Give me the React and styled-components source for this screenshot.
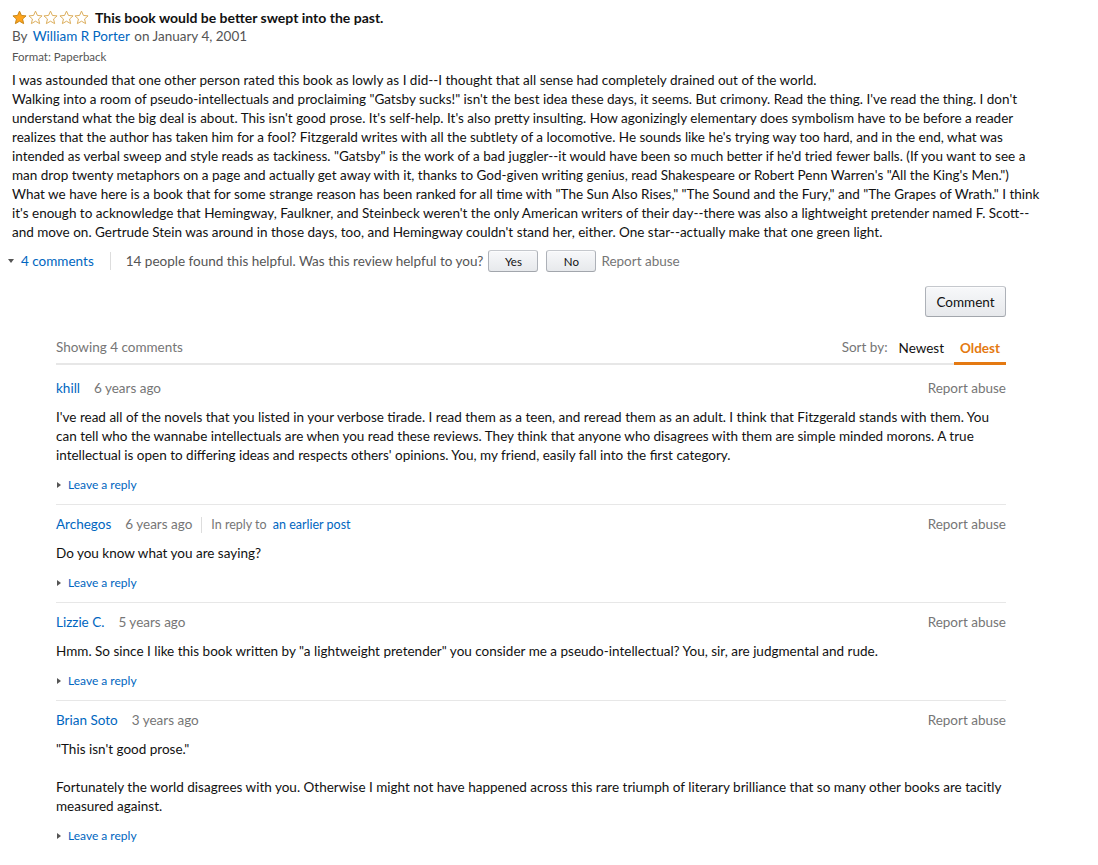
import React from 'react';
import styled, { createGlobalStyle } from 'styled-components';

const GlobalStyle = createGlobalStyle`
  body {
    margin: 0;
    background: #fff;
    font-family: Lato, "Liberation Sans", Arial, sans-serif;
    color: #111;
  }
`;

const reviewLines = [
  'I was astounded that one other person rated this book as lowly as I did--I thought that all sense had completely drained out of the world.',
  'Walking into a room of pseudo-intellectuals and proclaiming "Gatsby sucks!" isn\'t the best idea these days, it seems. But crimony. Read the thing. I\'ve read the thing. I don\'t',
  'understand what the big deal is about. This isn\'t good prose. It\'s self-help. It\'s also pretty insulting. How agonizingly elementary does symbolism have to be before a reader',
  'realizes that the author has taken him for a fool? Fitzgerald writes with all the subtlety of a locomotive. He sounds like he\'s trying way too hard, and in the end, what was',
  'intended as verbal sweep and style reads as tackiness. "Gatsby" is the work of a bad juggler--it would have been so much better if he\'d tried fewer balls. (If you want to see a',
  'man drop twenty metaphors on a page and actually get away with it, thanks to God-given writing genius, read Shakespeare or Robert Penn Warren\'s "All the King\'s Men.")',
  'What we have here is a book that for some strange reason has been ranked for all time with "The Sun Also Rises," "The Sound and the Fury," and "The Grapes of Wrath." I think',
  'it\'s enough to acknowledge that Hemingway, Faulkner, and Steinbeck weren\'t the only American writers of their day--there was also a lightweight pretender named F. Scott--',
  'and move on. Gertrude Stein was around in those days, too, and Hemingway couldn\'t stand her, either. One star--actually make that one green light.',
];

const comments = [
  {
    author: 'khill',
    age: '6 years ago',
    lines: [
      'I\'ve read all of the novels that you listed in your verbose tirade. I read them as a teen, and reread them as an adult. I think that Fitzgerald stands with them. You',
      'can tell who the wannabe intellectuals are when you read these reviews. They think that anyone who disagrees with them are simple minded morons. A true',
      'intellectual is open to differing ideas and respects others\' opinions. You, my friend, easily fall into the first category.',
    ],
  },
  {
    author: 'Archegos',
    age: '6 years ago',
    replyTo: true,
    lines: ['Do you know what you are saying?'],
  },
  {
    author: 'Lizzie C.',
    age: '5 years ago',
    lines: ['Hmm. So since I like this book written by "a lightweight pretender" you consider me a pseudo-intellectual? You, sir, are judgmental and rude.'],
  },
  {
    author: 'Brian Soto',
    age: '3 years ago',
    lines: [
      '"This isn\'t good prose."',
      '',
      'Fortunately the world disagrees with you. Otherwise I might not have happened across this rare triumph of literary brilliance that so many other books are tacitly',
      'measured against.',
    ],
  },
];

const Star = ({ filled }) => (
  <svg width="15" height="15" viewBox="0 0 24 24">
    <path
      d="M12 1.8l3.1 6.9 7.4.7-5.6 5 1.7 7.4L12 17.9l-6.6 3.9 1.7-7.4-5.6-5 7.4-.7z"
      fill={filled ? '#ffa41c' : '#fff'}
      stroke={filled ? '#c88719' : '#dcae5c'}
      strokeWidth="1.6"
      strokeLinejoin="round"
    />
  </svg>
);

function App() {
  return (
    <Page>
      <GlobalStyle />
      <TitleRow>
        <Stars>
          {[0, 1, 2, 3, 4].map((i) => (
            <Star key={i} filled={i === 0} />
          ))}
        </Stars>
        <ReviewTitle>This book would be better swept into the past.</ReviewTitle>
      </TitleRow>
      <Byline>
        By <Link>William R Porter</Link> on January 4, 2001
      </Byline>
      <Format>Format: Paperback</Format>
      <Body>
        {reviewLines.map((line, i) => (
          <Line key={i}>{line}</Line>
        ))}
      </Body>
      <ActionRow>
        <Toggle>
          <Caret $down />
          <Link>4 comments</Link>
        </Toggle>
        <Divider />
        <Helpful>14 people found this helpful. Was this review helpful to you?</Helpful>
        <SmallButton>Yes</SmallButton>
        <SmallButton>No</SmallButton>
        <Muted>Report abuse</Muted>
      </ActionRow>
      <CommentBar>
        <CommentButton>Comment</CommentButton>
      </CommentBar>
      <Comments>
        <CommentsHeader>
          <Showing>Showing 4 comments</Showing>
          <Sort>
            <SortLabel>Sort by:</SortLabel>
            <SortTab>Newest</SortTab>
            <SortTab $active>Oldest</SortTab>
          </Sort>
        </CommentsHeader>
        {comments.map((c, i) => (
          <Comment key={i} $first={i === 0} $last={i === comments.length - 1}>
            <CommentHead>
              <Meta>
                <Link>{c.author}</Link>
                <Age>{c.age}</Age>
                {c.replyTo && (
                  <ReplyTo>
                    In reply to <ReplyLink>an earlier post</ReplyLink>
                  </ReplyTo>
                )}
              </Meta>
              <Muted>Report abuse</Muted>
            </CommentHead>
            <CommentBody>
              {c.lines.map((line, j) => (
                <Line key={j}>{line || '\u00a0'}</Line>
              ))}
            </CommentBody>
            <LeaveReply>
              <Caret />
              <Link>Leave a reply</Link>
            </LeaveReply>
          </Comment>
        ))}
      </Comments>
    </Page>
  );
}

const Page = styled.div`
  padding: 8px 0 20px 12px;
  font-size: 13.5px;
  line-height: 19px;
`;

const TitleRow = styled.div`
  display: flex;
  align-items: center;
  height: 19px;
`;

const Stars = styled.div`
  display: flex;
  gap: 0.5px;
  margin-right: 6px;

  svg {
    display: block;
  }
`;

const ReviewTitle = styled.span`
  font-size: 14px;
  font-weight: 700;
  color: #111;
`;

const Link = styled.a`
  color: #0066c0;
  cursor: pointer;
`;

const Byline = styled.div`
  color: #555;

  ${Link} {
    margin: 0 1px 0 2px;
  }
`;

const Format = styled.div`
  margin-top: 3px;
  font-size: 11.5px;
  line-height: 15px;
  color: #555;
`;

const Body = styled.div`
  margin-top: 7px;
  color: #111;
`;

const Line = styled.div`
  white-space: nowrap;
`;

const ActionRow = styled.div`
  display: flex;
  align-items: center;
  margin: 8px 0 0 -4px;
  height: 22px;
`;

const Toggle = styled.div`
  display: flex;
  align-items: center;
  gap: 7px;
`;

const Caret = styled.i`
  display: inline-block;
  width: 0;
  height: 0;
  ${(p) =>
    p.$down
      ? `border-left: 3.5px solid transparent;
         border-right: 3.5px solid transparent;
         border-top: 4px solid #555;`
      : `border-top: 3.5px solid transparent;
         border-bottom: 3.5px solid transparent;
         border-left: 4px solid #555;`}
`;

const Divider = styled.span`
  width: 1px;
  height: 18px;
  background: #ddd;
  margin: 0 15px 0 16px;
`;

const Helpful = styled.span`
  color: #555;
  margin-right: 5px;
`;

const SmallButton = styled.button`
  font-family: inherit;
  font-size: 11.5px;
  color: #111;
  width: 50px;
  height: 22px;
  padding: 0;
  margin-right: 8px;
  border: 1px solid #adb1b8;
  border-top-color: #c5c8cd;
  border-bottom-color: #a2a6ac;
  border-radius: 3px;
  background: linear-gradient(to bottom, #f7f8fa, #e7e9ec);
  box-shadow: 0 1px 0 rgba(255, 255, 255, 0.6) inset;
  & + & {
    margin-right: 5px;
  }
`;

const Muted = styled.span`
  color: #767676;
`;

const CommentBar = styled.div`
  display: flex;
  justify-content: flex-end;
  width: 994px;
  margin-top: 14px;
`;

const CommentButton = styled(SmallButton)`
  width: 81px;
  height: 31px;
  font-size: 13.5px;
  margin: 0;
  & + & {
    margin: 0;
  }
`;

const Comments = styled.div`
  width: 950px;
  margin: 21px 0 0 44px;
`;

const CommentsHeader = styled.div`
  display: flex;
  justify-content: space-between;
  align-items: flex-end;
  border-bottom: 2px solid #e7e7e7;
`;

const Showing = styled.span`
  color: #767676;
  padding-bottom: 6px;
`;

const Sort = styled.div`
  display: flex;
  align-items: flex-end;
`;

const SortLabel = styled.span`
  color: #767676;
  padding-bottom: 6px;
  margin-right: 5px;
`;

const SortTab = styled.span`
  padding: 0 6px 4px;
  margin-bottom: -2px;
  color: ${(p) => (p.$active ? '#e47911' : '#111')};
  font-weight: ${(p) => (p.$active ? 700 : 400)};
  border-bottom: 3px solid ${(p) => (p.$active ? '#e47911' : 'transparent')};
  margin-left: ${(p) => (p.$active ? '4px' : '0')};
`;

const Comment = styled.div`
  padding: ${(p) => (p.$first ? '14px' : '10px')} 0 12px;
  border-bottom: ${(p) => (p.$last ? 'none' : '1px solid #e7e7e7')};
`;

const CommentHead = styled.div`
  display: flex;
  justify-content: space-between;
  align-items: center;
`;

const Meta = styled.div`
  display: flex;
  align-items: center;
`;

const Age = styled.span`
  color: #767676;
  margin-left: 14px;
`;

const ReplyLink = styled(Link)`
  font-size: 12.5px;
  margin-left: 3px;
`;

const ReplyTo = styled.span`
  color: #767676;
  font-size: 12.5px;
  margin-left: 9px;
  padding-left: 9px;
  border-left: 1px solid #ddd;
  line-height: 16px;
`;

const CommentBody = styled.div`
  margin-top: 10px;
  color: #111;
`;

const LeaveReply = styled.div`
  display: flex;
  align-items: center;
  gap: 7px;
  margin-top: 12px;
  padding-left: 1px;
  line-height: 15px;
  font-size: 12px;
`;

export default App;
